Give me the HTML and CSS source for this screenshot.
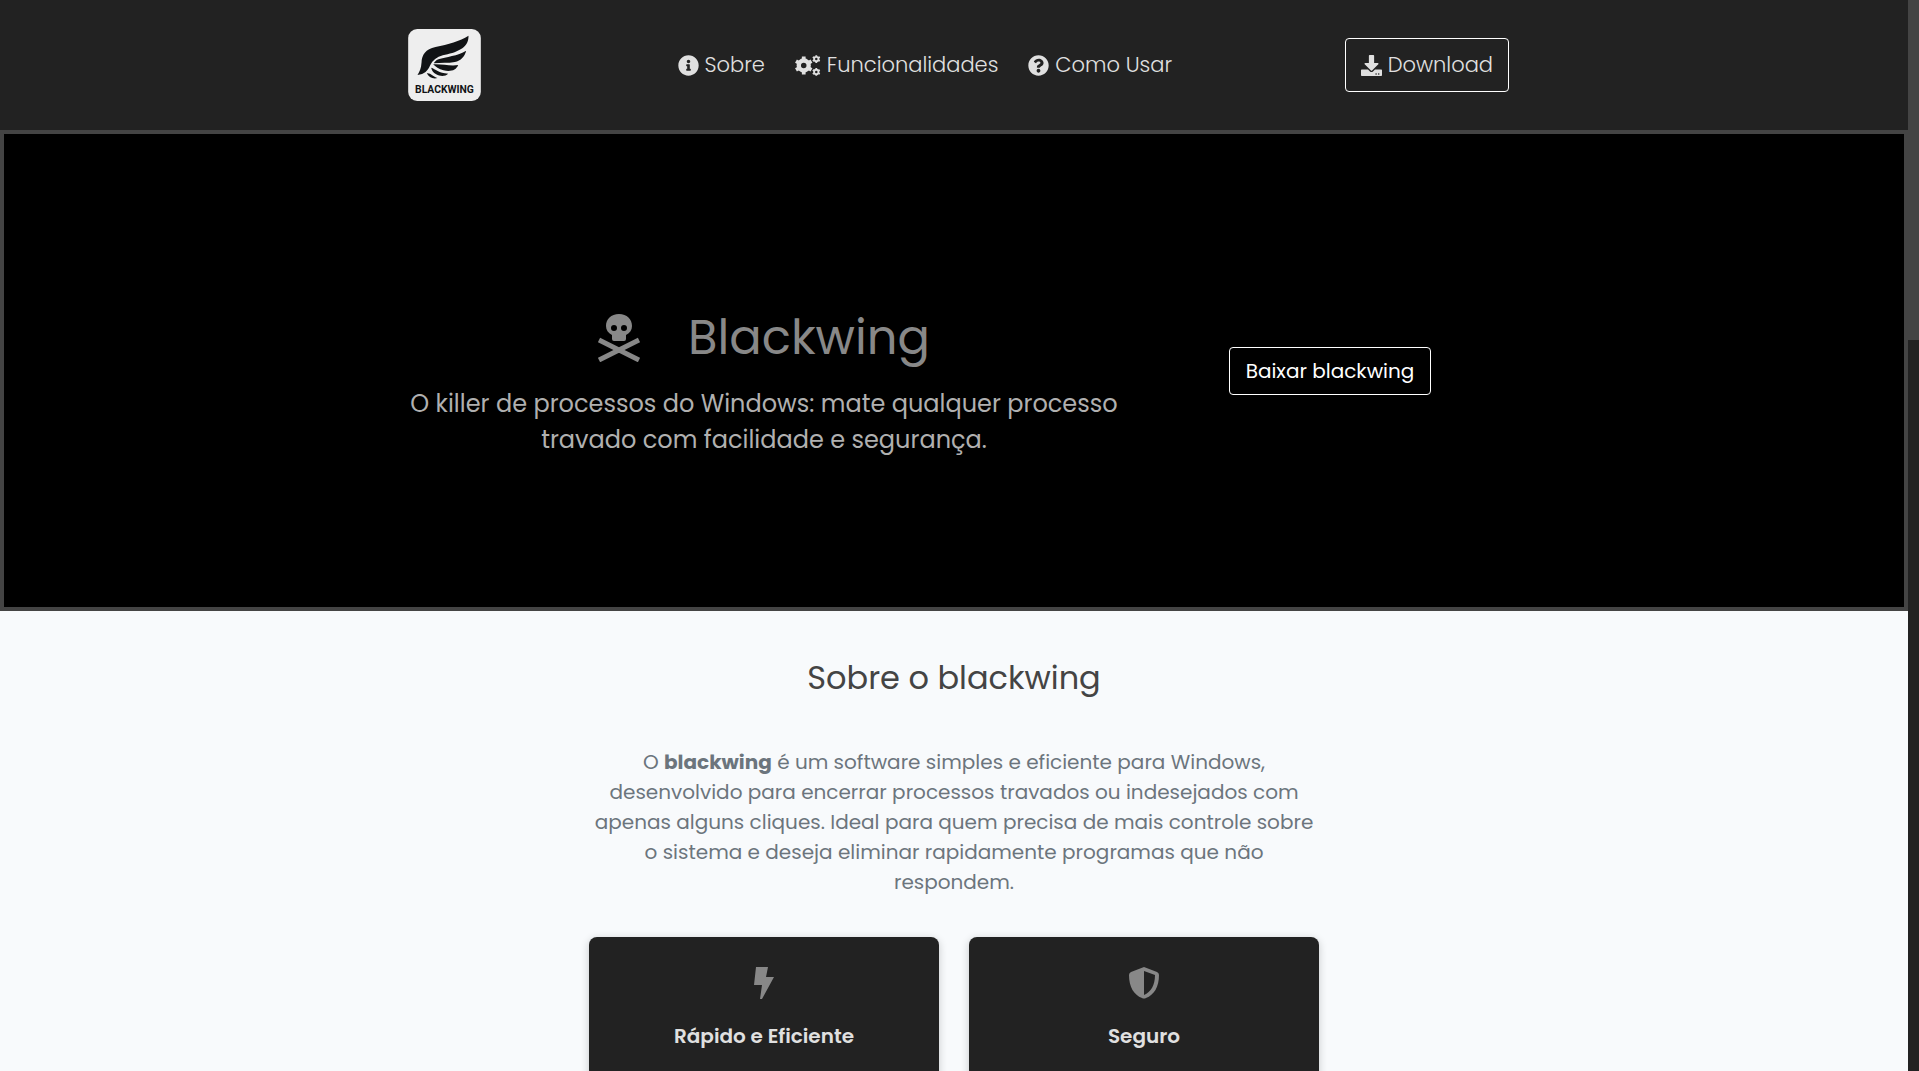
FILE: index.html
```html
<!DOCTYPE html>
<html lang="pt-BR">
<head>
    <meta charset="UTF-8">
    <meta name="viewport" content="width=device-width, initial-scale=1.0">
    <title>Blackwing</title>
    <link rel="stylesheet" href="styles.css">
</head>
<body>

<div class="page">
    <header class="header">
        <div class="container header-content">
            <a href="#" class="logo" aria-label="Blackwing">
                <svg viewBox="0 0 218 216">
                    <rect width="218" height="216" rx="27" fill="#eeeeee"/>
                    <g fill="#111315">
                        <path d="M181 20C155 36 120 46 82 54C52 60 41 78 40 101C39 117 35 127 28 138C49 137 59 125 66 109C73 94 86 84 104 79C143 70 182 59 181 20Z"/>
                        <path d="M174 65C149 81 113 83 91 91C83 94 79 99 77 103C99 100 120 103 140 99C158 95 170 82 174 65Z"/>
                        <path d="M75 106C100 104 125 112 150 108C144 124 127 129 106 124C92 121 82 113 75 106Z"/>
                        <path d="M69 116C82 120 91 132 120 134C111 143 96 142 84 136C75 131 71 124 69 116Z"/>
                        <path d="M56 133C67 131 75 143 88 147C74 151 61 144 56 133Z"/>
                    </g>
                    <text x="109" y="191" text-anchor="middle" class="logo-text">BLACKWING</text>
                </svg>
            </a>
            <nav class="nav">
                <a href="#sobre">
                    <svg class="icon" viewBox="0 0 512 512"><path d="M256 8C119.043 8 8 119.083 8 256c0 136.997 111.043 248 248 248s248-111.003 248-248C504 119.083 392.957 8 256 8zm0 110c23.196 0 42 18.804 42 42s-18.804 42-42 42-42-18.804-42-42 18.804-42 42-42zm56 254c0 6.627-5.373 12-12 12h-88c-6.627 0-12-5.373-12-12v-24c0-6.627 5.373-12 12-12h12v-64h-12c-6.627 0-12-5.373-12-12v-24c0-6.627 5.373-12 12-12h64c6.627 0 12 5.373 12 12v100h12c6.627 0 12 5.373 12 12v24z"/></svg>
                    <span>Sobre</span>
                </a>
                <a href="#funcionalidades">
                    <svg class="icon icon-wide" viewBox="0 0 640 512" fill="none" stroke="currentColor">
                        <circle cx="215" cy="256" r="122" stroke-width="108"/>
                        <path d="M215 36v75M215 401v75M24 146l64 37M342 329l64 37M24 366l64-37M342 183l64-37" stroke-width="92"/>
                        <circle cx="524" cy="98" r="54" stroke-width="46"/>
                        <path d="M524 2v34M524 160v34M438 49l30 17M580 130l30 17M438 147l30-17M580 66l30-17" stroke-width="44"/>
                        <circle cx="524" cy="414" r="54" stroke-width="46"/>
                        <path d="M524 318v34M524 476v34M438 365l30 17M580 446l30 17M438 463l30-17M580 382l30-17" stroke-width="44"/>
                    </svg>
                    <span>Funcionalidades</span>
                </a>
                <a href="#como-usar">
                    <svg class="icon" viewBox="0 0 512 512"><path d="M504 256c0 136.997-111.043 248-248 248S8 392.997 8 256C8 119.083 119.043 8 256 8s248 111.083 248 248zM262.655 90c-54.497 0-89.255 22.957-116.549 63.758-3.536 5.286-2.353 12.415 2.715 16.258l34.699 26.31c5.205 3.947 12.621 3.008 16.665-2.122 17.864-22.658 30.113-35.797 57.303-35.797 20.429 0 45.698 13.148 45.698 32.958 0 14.976-12.363 22.667-32.534 33.976C247.128 238.528 216 254.941 216 296v4c0 6.627 5.373 12 12 12h56c6.627 0 12-5.373 12-12v-1.333c0-28.462 83.186-29.647 83.186-106.667 0-58.002-60.165-102-116.531-102zM256 338c-25.365 0-46 20.635-46 46 0 25.364 20.635 46 46 46s46-20.636 46-46c0-25.365-20.635-46-46-46z"/></svg>
                    <span>Como Usar</span>
                </a>
            </nav>
            <a href="#download" class="btn-download">
                <svg class="icon" viewBox="0 0 512 512"><path d="M216 0h80c13.3 0 24 10.7 24 24v168h87.7c17.8 0 26.7 21.5 14.1 34.1L269.7 378.3c-7.5 7.5-19.8 7.5-27.3 0L90.1 226.1c-12.6-12.6-3.7-34.1 14.1-34.1H192V24c0-13.3 10.7-24 24-24zm296 376v112c0 13.3-10.7 24-24 24H24c-13.3 0-24-10.7-24-24V376c0-13.3 10.7-24 24-24h146.7l49 49c20.1 20.1 52.5 20.1 72.6 0l49-49H488c13.3 0 24 10.7 24 24zm-124 88c0-11-9-20-20-20s-20 9-20 20 9 20 20 20 20-9 20-20zm64 0c0-11-9-20-20-20s-20 9-20 20 9 20 20 20 20-9 20-20z"/></svg>
                <span>Download</span>
            </a>
        </div>
    </header>

    <section class="hero">
        <div class="container hero-content">
            <div class="hero-text">
                <h1>
                    <svg class="hero-icon" viewBox="0 0 42 48">
                        <path fill-rule="evenodd" d="M21 0C13 0 8 5 8 12C8 16 10 19 14 21V25Q14 27 16 27H26Q28 27 28 25V21C32 19 34 16 34 12C34 5 29 0 21 0ZM16 11A3 3 0 1 1 16 17A3 3 0 1 1 16 11ZM26 11A3 3 0 1 1 26 17A3 3 0 1 1 26 11Z"/>
                        <path d="M1 26L41 46M41 26L1 46" fill="none" stroke="currentColor" stroke-width="5"/>
                    </svg>
                    <span>Blackwing</span>
                </h1>
                <p>O killer de processos do Windows: mate qualquer processo travado com facilidade e segurança.</p>
            </div>
            <div class="hero-action">
                <button type="button" class="btn-baixar">Baixar blackwing</button>
            </div>
        </div>
    </section>

    <section class="sobre" id="sobre">
        <h2>Sobre o blackwing</h2>
        <div class="sobre-content">
            <p>O <strong>blackwing</strong> é um software simples e eficiente para Windows, desenvolvido para encerrar processos travados ou indesejados com apenas alguns cliques. Ideal para quem precisa de mais controle sobre o sistema e deseja eliminar rapidamente programas que não respondem.</p>
            <div class="cards">
                <div class="card">
                    <svg class="card-icon" viewBox="0 0 32 32"><path d="M8 0H20L18 10H26L14 32H12L14 18H6Z"/></svg>
                    <h3>Rápido e Eficiente</h3>
                </div>
                <div class="card">
                    <svg class="card-icon" viewBox="0 0 32 32"><path fill-rule="evenodd" d="M16 0L29 5Q31 6 31 8C31 20 26 28 18 31Q16 32 14 31C6 28 1 20 1 8Q1 6 3 5ZM16 4V28C23 25 27 18 27 8Z"/></svg>
                    <h3>Seguro</h3>
                </div>
            </div>
        </div>
    </section>
</div>

<!-- barra de rolagem -->
<div class="scrollbar"><div class="scrollbar-thumb"></div></div>

</body>
</html>
```

FILE: styles.css
```css
* {
    margin: 0;
    padding: 0;
    box-sizing: border-box;
}
body {
    display: flex;
    height: 100vh;
    overflow: hidden;
    font-family: Poppins, Inter, "Liberation Sans", sans-serif;
    font-size: 20px;
    line-height: 30px;
    background-color: #f8fafc;
}
a {
    color: inherit;
    text-decoration: none;
}
svg {
    display: block;
    fill: currentColor;
}
.page {
    flex: 1;
    overflow: hidden;
}
.scrollbar {
    width: 11px;
    background-color: #222;
}
.scrollbar-thumb {
    height: 340px;
    background-color: #444;
}
.container {
    width: 100%;
    max-width: 1110px;
    margin: 0 auto;
}

/* Cabeçalho */
.header {
    padding: 29px 0;
    background-color: #222;
    color: #e0e0e0;
}
.header-content {
    display: flex;
    align-items: center;
    justify-content: space-between;
}
.logo {
    padding: 0 24px 0 9px;
}
.logo svg {
    width: 73px;
    height: 72px;
}
.logo-text {
    font-family: Roboto, sans-serif;
    font-size: 31px;
    font-weight: bold;
    fill: #111315;
}
.nav {
    display: flex;
    gap: 30px;
}
.nav a, .btn-download {
    display: flex;
    align-items: center;
    gap: 6px;
    font-size: 21px;
    font-weight: 300;
}
.icon {
    width: 21px;
    height: 21px;
}
.icon.icon-wide {
    width: 26px;
    fill: none;
}
.btn-download {
    padding: 11px 15px;
    border: 1px solid #fff;
    border-radius: 4px;
}

/* Hero */
.hero {
    display: flex;
    align-items: center;
    min-height: 481px;
    background-color: #000;
    border: 4px solid #444;
}
.hero-content {
    display: flex;
    align-items: center;
    gap: 22px;
}
.hero-text {
    flex: 1;
    text-align: center;
}
.hero-text h1 {
    display: flex;
    align-items: center;
    justify-content: center;
    gap: 48px;
    margin: 18px 0 12px;
    font-size: 48px;
    font-weight: 400;
    line-height: 72px;
    color: #888;
}
.hero-icon {
    width: 42px;
    height: 48px;
}
.hero-text p {
    font-size: 24px;
    line-height: 36px;
    color: #b0b0b0;
}
.hero-action {
    width: 358px;
    text-align: center;
}
.btn-baixar {
    padding: 8px 16px;
    border: 1px solid #fff;
    border-radius: 4px;
    background-color: transparent;
    color: #fff;
    font: inherit;
    cursor: pointer;
}

/* Sobre */
.sobre {
    padding: 43px 0;
    text-align: center;
}
.sobre h2 {
    margin-bottom: 45px;
    font-size: 32px;
    font-weight: 400;
    line-height: 48px;
    color: #444;
}
.sobre-content {
    max-width: 730px;
    margin: 0 auto;
}
.sobre-content p {
    margin-bottom: 40px;
    color: #6c757d;
}
.cards {
    display: grid;
    grid-template-columns: 1fr 1fr;
    gap: 30px;
}
.card {
    min-height: 240px;
    padding: 30px;
    border-radius: 8px;
    background-color: #222;
    box-shadow: 0 2px 8px rgba(0, 0, 0, 0.2);
}
.card-icon {
    width: 32px;
    height: 32px;
    margin: 0 auto 22px;
    color: #888;
}
.card h3 {
    font-size: 20px;
    font-weight: 600;
    color: #e0e0e0;
}
```
